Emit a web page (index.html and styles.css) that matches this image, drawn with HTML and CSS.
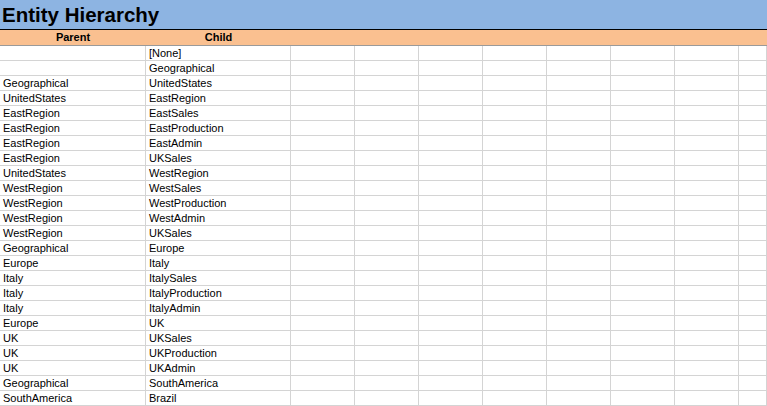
FILE: index.html
```html
<!DOCTYPE html>
<html lang="en">
<head>
<meta charset="UTF-8">
<meta name="viewport" content="width=device-width, initial-scale=1.0">
<title>Entity Hierarchy</title>
<link rel="stylesheet" href="styles.css">
</head>
<body>
<div class="sheet">
    <div class="sheet-title">Entity Hierarchy</div>
    <table class="grid">
        <thead>
            <tr>
                <th class="col-parent">Parent</th>
                <th class="col-child">Child</th>
                <th class="col-blank"></th>
                <th class="col-blank"></th>
                <th class="col-blank"></th>
                <th class="col-blank"></th>
                <th class="col-blank"></th>
                <th class="col-blank"></th>
                <th class="col-blank"></th>
                <th class="col-rest"></th>
            </tr>
        </thead>
        <tbody id="rows"></tbody>
    </table>
</div>

<script>
    // Parent / child pairs
    const pairs = [
        ['', '[None]'],
        ['', 'Geographical'],
        ['Geographical', 'UnitedStates'],
        ['UnitedStates', 'EastRegion'],
        ['EastRegion', 'EastSales'],
        ['EastRegion', 'EastProduction'],
        ['EastRegion', 'EastAdmin'],
        ['EastRegion', 'UKSales'],
        ['UnitedStates', 'WestRegion'],
        ['WestRegion', 'WestSales'],
        ['WestRegion', 'WestProduction'],
        ['WestRegion', 'WestAdmin'],
        ['WestRegion', 'UKSales'],
        ['Geographical', 'Europe'],
        ['Europe', 'Italy'],
        ['Italy', 'ItalySales'],
        ['Italy', 'ItalyProduction'],
        ['Italy', 'ItalyAdmin'],
        ['Europe', 'UK'],
        ['UK', 'UKSales'],
        ['UK', 'UKProduction'],
        ['UK', 'UKAdmin'],
        ['Geographical', 'SouthAmerica'],
        ['SouthAmerica', 'Brazil']
    ];

    const tbody = document.getElementById('rows');

    pairs.forEach((pair) => {
        const tr = document.createElement('tr');
        pair.forEach((text) => {
            const td = document.createElement('td');
            td.textContent = text;
            tr.appendChild(td);
        });
        for (let i = 0; i < 8; i++) {
            tr.appendChild(document.createElement('td'));
        }
        tbody.appendChild(tr);
    });
</script>
</body>
</html>
```

FILE: styles.css
```css
body {
    margin: 0;
    background-color: #fff;
    font-family: "Liberation Sans", Arial, sans-serif;
    color: #000;
}

.sheet {
    width: 767px;
    overflow: hidden;
}

.sheet-title {
    height: 29px;
    line-height: 30px;
    padding-left: 2px;
    background-color: #8db4e2;
    border-bottom: 1px solid #000;
    font-size: 20.5px;
    font-weight: bold;
}

.grid {
    width: 767px;
    border-collapse: separate;
    border-spacing: 0;
    table-layout: fixed;
    font-size: 11px;
}

.grid th,
.grid td {
    box-sizing: border-box;
    white-space: nowrap;
    overflow: hidden;
}

.grid th {
    height: 16px;
    padding: 0;
    background-color: #fac090;
    border-bottom: 1px solid #9a9a9a;
    font-weight: bold;
    text-align: center;
    line-height: 15px;
}

.grid td {
    height: 15px;
    padding: 0 0 0 3px;
    line-height: 14px;
    border-right: 1px solid #d4d4d4;
    border-bottom: 1px solid #d4d4d4;
    text-align: left;
}

.col-parent {
    width: 146px;
}

.col-child {
    width: 145px;
}

.col-blank {
    width: 64px;
}

.col-rest {
    width: auto;
}
```
